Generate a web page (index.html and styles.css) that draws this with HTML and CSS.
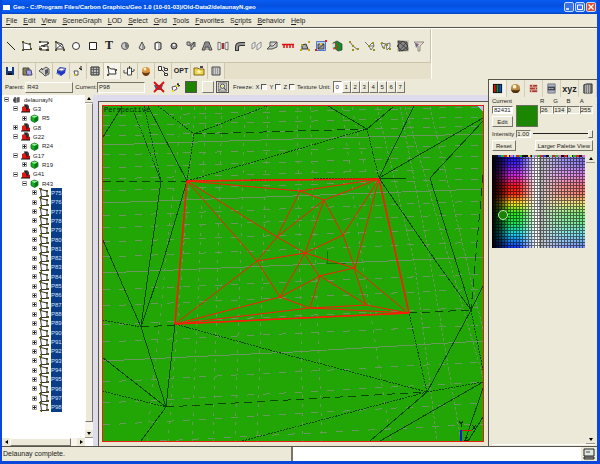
FILE: index.html
```html
<!DOCTYPE html>
<html lang="en">
<head>
<meta charset="utf-8">
<title>Geo - delaunayN.geo</title>
<link rel="stylesheet" href="styles.css">
</head>
<body>
<svg class="defs" aria-hidden="true">
  <symbol id="plus" viewBox="0 0 5 5"><path d="M.5.5h4v4h-4z" fill="#fff" stroke="#999"/><path d="M1 2h3v1H1zM2 1h1v3H2z" fill="#222"/></symbol>
  <symbol id="minus" viewBox="0 0 5 5"><path d="M.5.5h4v4h-4z" fill="#fff" stroke="#999"/><path d="M1 2h3v1H1z" fill="#222"/></symbol>
  <symbol id="group" viewBox="0 0 9 9"><path d="M3 2l3-2 2 2v3H4z" fill="#444"/><path d="M1 3l2-1 2 2v4H1z" fill="#e01818"/><path d="M5 5l2-1 2 1v3H5z" fill="#c01010"/><path d="M3 1h2v2M6 3v3M0 8h9" stroke="#111" fill="none"/></symbol>
  <symbol id="cube" viewBox="0 0 9 9"><path d="M1 2.500L4.500 1 8 2.500v4L4.500 8.500 1 6.500z" fill="#12b022" stroke="#075a0c" stroke-width=".7"/><path d="M1.500 2.500l3-1 3 1-3 1.500z" fill="#8ff08f"/><path d="M4.500 4v4.200L7.700 6.300V2.700z" fill="#087414"/></symbol>
  <symbol id="poly" viewBox="0 0 10 10"><path d="M1.500 1.500L8 3v5.500L2.500 8.500z" fill="#fff" stroke="#333"/><path d="M0 0h3v2H0zM7 2h2v2H7zM7 7h3v2H7zM1 8h2v2H1z" fill="#54542a"/><path d="M0 1h1v1H0zM1 9h1v1H1z" fill="#e8dc20"/></symbol>
</svg>
<div class="window">
  <header class="titlebar">
    <span class="app-icon"></span>
    <h1>Geo - C:/Program Files/Carbon Graphics/Geo 1.0 (10-01-03)/Old-Data2/delaunayN.geo</h1>
    <button class="cap" aria-label="Minimize"><svg viewBox="0 0 8 8"><path d="M1 6h3" stroke="#fff" stroke-width="1.500"/></svg></button>
    <button class="cap" aria-label="Maximize"><svg viewBox="0 0 8 8"><path d="M1.500 2h5v4.500h-5z" fill="none" stroke="#fff"/></svg></button>
    <button class="cap close" aria-label="Close"><svg viewBox="0 0 8 8"><path d="M1.500 1.500l5 5m0-5l-5 5" stroke="#fff" stroke-width="1.400"/></svg></button>
  </header>
  <nav class="menu">
    <a href="#"><u>F</u>ile</a><a href="#"><u>E</u>dit</a><a href="#"><u>V</u>iew</a><a href="#"><u>S</u>ceneGraph</a><a href="#"><u>L</u>OD</a><a href="#"><u>S</u>elect</a><a href="#"><u>G</u>rid</a><a href="#"><u>T</u>ools</a><a href="#"><u>F</u>avorites</a><a href="#">S<u>c</u>ripts</a><a href="#"><u>B</u>ehavior</a><a href="#"><u>H</u>elp</a>
  </nav>
  <section class="toolbars">
    <div class="bars">
      <div class="bar create">
        <button aria-label="Line"><svg viewBox="0 0 12 12"><path d="M2 2l8 8" stroke="#222"/></svg></button>
        <button aria-label="Polygon"><svg viewBox="0 0 12 12"><path d="M2 2.500l7 2 1 5H2.500z" fill="#fff" stroke="#444"/><path d="M1 1h2v2H1zM8 3h2v2H8zM9 8h2v2H9zM1 9h2v2H1z" fill="#55552a"/></svg></button>
        <button aria-label="Mesh"><svg viewBox="0 0 12 12"><path d="M1 2h9v2l-7 2h7v4H2V6" fill="#fff" stroke="#333"/><path d="M1 1h2v2H1zM9 2h2v2H9zM1 8h3v2H1zM8 9h3v2H8zM5 5h2v2H5z" fill="#444422"/></svg></button>
        <button aria-label="Strip"><svg viewBox="0 0 12 12"><path d="M2 2l6 2 2 5H2zl8 7M8 4L2 9" fill="#fff" stroke="#444"/><path d="M1 1h2v2H1zM9 9h2v2H9zM1 9h2v2H1z" fill="#55552a"/></svg></button>
        <button aria-label="Circle"><svg viewBox="0 0 12 12"><circle cx="6" cy="6" r="3.500" fill="#fff" stroke="#333"/></svg></button>
        <button aria-label="Rectangle"><svg viewBox="0 0 12 12"><path d="M2.500 2.500h7v7h-7z" fill="#fff" stroke="#222"/></svg></button>
        <button class="serif">T</button>
        <button aria-label="Sphere"><svg viewBox="0 0 12 12"><circle cx="6" cy="6" r="3.500" fill="#ccc" stroke="#555"/><path d="M6 2v5l3 2V4z" fill="#777"/></svg></button>
        <button aria-label="Cone"><svg viewBox="0 0 12 12"><path d="M6 2l3 6-3 2-3-2z" fill="#ddd" stroke="#444"/><path d="M6 3l2.500 5L6 9z" fill="#999"/></svg></button>
        <button aria-label="Cylinder"><svg viewBox="0 0 12 12"><path d="M3 3l3-1 3 1v6l-3 1-3-1z" fill="#bbb" stroke="#333"/><path d="M4 3.500h2v6H4z" fill="#fff"/></svg></button>
        <button aria-label="Geosphere"><svg viewBox="0 0 12 12"><circle cx="6" cy="6" r="3" fill="#999" stroke="#333"/><path d="M5 4h2v2H5z" fill="#eee"/></svg></button>
        <button aria-label="Extrude"><svg viewBox="0 0 12 12"><path d="M2 2h3v3l4-3v4l-3 4V6L2 5zM6 6l4-4v5" fill="#bbb" stroke="#555"/></svg></button>
        <button aria-label="Loft"><svg viewBox="0 0 12 12"><path d="M4 2h4l1 3 2 5H8V7H4v3H1l2-5z" fill="#aaa" stroke="#444"/><path d="M5 3v7M7 3v7" stroke="#555" stroke-width=".7"/></svg></button>
        <button aria-label="Revolve"><svg viewBox="0 0 12 12"><path d="M1 2l3 1v6l-3 1zM11 2L8 3v6l3 1z" fill="#eee" stroke="#555" stroke-width=".8"/><path d="M5 3h2v6H5z" fill="#a33"/></svg></button>
        <button aria-label="Pipe"><svg viewBox="0 0 12 12"><path d="M3 11V7q0-3 4-3h4" fill="none" stroke="#333" stroke-width="4"/><path d="M3 10V7q0-3 4-3h4" fill="none" stroke="#999" stroke-width="2"/></svg></button>
        <button aria-label="Mirror"><svg viewBox="0 0 12 12"><path d="M2 4l3-2v5L2 9zM7 5l4-3v5l-4 3z" fill="#eee" stroke="#777" stroke-width=".8"/></svg></button>
        <button aria-label="Shell"><svg viewBox="0 0 12 12"><path d="M4 2h7v5L6 9H1l3-3zM4 6h3l4-4" fill="#ccc" stroke="#444" stroke-width=".9"/></svg></button>
        <button aria-label="Distribute"><svg viewBox="0 0 12 12"><path d="M0 4.500h12M2 4v4M5 4v4M8 4v4M11 4v4" stroke="#d11" stroke-width="1.500"/></svg></button>
        <button aria-label="Edit points"><svg viewBox="0 0 12 12"><path d="M3 5l4-1 2 5H3z" fill="#aaa" stroke="#333"/><path d="M1 9h2v2H1zM9 1h2v2H9zM9 9h2v2H9zM2 4h2v2H2z" fill="#b8a818"/></svg></button>
        <button aria-label="Box select"><svg viewBox="0 0 12 12"><path d="M1.500 1.500h9v9h-9z" fill="#bcd0f8" stroke="#5577cc"/><path d="M3 4h6v5H3zM3 9l6-5" fill="#999" stroke="#333" stroke-width=".8"/><path d="M0 9h2v2H0zM10 0h2v2h-2z" fill="#d22"/><path d="M5 3h2v2H5z" fill="#dc3"/></svg></button>
        <button aria-label="Colorize"><svg viewBox="0 0 12 12"><path d="M2 3l4-2 5 3v6l-4 1-5-4z" fill="#178a2a" stroke="#333" stroke-width=".7"/><path d="M1 6l4-3M2 9l4-1M4 3l3 5" stroke="#d22"/><path d="M1 4l3-1v4l-3 1z" fill="#ddd"/></svg></button>
        <button aria-label="Snap line"><svg viewBox="0 0 12 12"><path d="M2 2l3 4 5 4" fill="none" stroke="#666"/><path d="M1 1h2v2H1zM4 5h2v2H4zM9 8h2v2H9zM4 9h2v2H4z" fill="#989020"/></svg></button>
        <button aria-label="Snap polygon"><svg viewBox="0 0 12 12"><path d="M1 2l4 4h5M5 6l4-4 1 4-3 4z" fill="#eee" stroke="#555" stroke-width=".8"/><path d="M4 5h2v2H4zM8 2h2v2H8zM9 9h2v2H9z" fill="#989020"/></svg></button>
        <button aria-label="Join"><svg viewBox="0 0 12 12"><path d="M1 3l5 1-3 4zM6 4l4-1v4l-3 3z" fill="#eee" stroke="#555" stroke-width=".8"/><path d="M1 2h2v2H1zM3 7h2v2H3zM6 4h2v2H6zM9 8h2v2H9z" fill="#989020"/></svg></button>
        <button class="on" aria-label="Delaunay"><svg viewBox="0 0 12 12"><path d="M1 1l9 1 1 8-9 1zM1 1l10 9M2 11l8-9M0 6l6-5 5 5-6 5z" fill="#888" stroke="#333" stroke-width=".8"/></svg></button>
        <button aria-label="Filter"><svg viewBox="0 0 12 12"><path d="M1 2h10L7 6v5H5V6z" fill="#f0d8c8" stroke="#777" stroke-width=".8"/><path d="M2 3l4 1-3 4z" fill="#668"/></svg></button>
      </div>
      <div class="bar modes">
        <button aria-label="Save"><svg viewBox="0 0 12 12"><path d="M2 2h8v8H2z" fill="#163a78"/><path d="M4 2h4v4H4z" fill="#e8f0ff"/><path d="M4 8h4v2H4z" fill="#111"/></svg></button>
        <button aria-label="Paste"><svg viewBox="0 0 12 12"><path d="M2 3h6v7H2z" fill="#8a8450" stroke="#444"/><path d="M5 5h5l1 5H6z" fill="#a8a8e8" stroke="#447"/></svg></button>
        <button aria-label="Back"><svg viewBox="0 0 12 12"><path d="M1 6l3-3v2l4-3 3 2v5l-4 2-3-3z" fill="#ccc" stroke="#333" stroke-width=".8"/><path d="M7 5l3-1v4l-3 2z" fill="#555"/></svg></button>
        <button aria-label="Solid"><svg viewBox="0 0 12 12"><path d="M2 5l3-3 6 1-1 5-4 3-4-3z" fill="#2038c8"/><path d="M3 5l3-2 4 1-3 2zM1 8l4 2" fill="#fff" stroke="#88a"/></svg></button>
        <button aria-label="Pick"><svg viewBox="0 0 12 12"><path d="M2 6h4v4H3z" fill="#fff" stroke="#555"/><path d="M7 3l3 2M9 1v4" stroke="#111"/><path d="M2 9h2v2H2z" fill="#bb2"/></svg></button>
        <button aria-label="Grid"><svg viewBox="0 0 12 12"><path d="M2 2h8v8H2z" fill="#bbb" stroke="#222"/><path d="M4.500 2v8M7.500 2v8M2 4.500h8M2 7.500h8" stroke="#555" stroke-width=".8"/></svg></button>
        <button class="on" aria-label="Polygon mode"><svg viewBox="0 0 12 12"><path d="M2 2l1 7h7L9 4H5z" fill="#fff" stroke="#333"/><path d="M1 1h2v2H1zM9 4h2v2H9zM1 9h2v2H1z" fill="#55552a"/></svg></button>
        <button aria-label="Transform"><svg viewBox="0 0 12 12"><path d="M4.500 3h4v7h-4zM6.500 1v3M1 5v3h3M8 7l3-1V4" fill="#fff" stroke="#333" stroke-width=".9"/></svg></button>
        <button aria-label="Shade"><svg viewBox="0 0 12 12"><circle cx="6" cy="6" r="4" fill="#d8943c"/><path d="M2 7q4 2 8 0q-1 4-4 4t-4-4" fill="#6e3a10"/><circle cx="5" cy="4" r="1.500" fill="#fff0c0"/></svg></button>
        <button aria-label="Hierarchy"><svg viewBox="0 0 12 12"><path d="M1.500 1.500h3v4h-3zM6 2l2 1M5 5l3 3" fill="#fff" stroke="#333"/><path d="M7.500 3.500h3v2h-3zM7.500 8.500h3v2h-3z" fill="#fff" stroke="#333"/></svg></button>
        <button class="opt">OPT</button>
        <button aria-label="Folder"><svg viewBox="0 0 12 12"><path d="M1 3h4l1 1h5v6H1z" fill="#f0d048" stroke="#806818"/><path d="M6 4l1 2h2L7 7l1 2-2-1-2 1 1-2-2-1h2z" fill="#fff8c0"/><path d="M7 1h3v2H7z" fill="#445"/></svg></button>
        <button aria-label="Texture"><svg viewBox="0 0 12 12"><path d="M2 2h8v8H2z" fill="#ccc" stroke="#444"/><path d="M3 4h6M3 6h6M3 8h6" stroke="#666" stroke-dasharray="1 1"/></svg></button>
      </div>
    </div>
  </section>
  <main class="work">
    <div class="left">
      <form class="params">
        <span class="field"><label for="parent">Parent:</label><input id="parent" class="raised" value="R43" readonly></span>
        <span class="field tight"><label for="current">Current:</label><input id="current" class="sunken" value="P98" readonly></span>
        <button type="button" class="tool first" aria-label="Disable"><svg viewBox="0 0 12 12"><path d="M1 4h9l-2 5H3z" fill="#557"/><path d="M1 1l10 10M11 1L1 11" stroke="#e01010" stroke-width="1.800"/></svg></button>
        <button type="button" class="tool" aria-label="Pick vertex"><svg viewBox="0 0 12 12"><path d="M2 6l4-1 1 3-4 2z" fill="#fff" stroke="#555"/><path d="M8 2v4M7 3l3 2" stroke="#111"/><path d="M6 4h2v2H6zM2 9h2v2H2z" fill="#dd3"/></svg></button>
        <button type="button" class="color" aria-label="Color"></button>
        <button type="button" class="blank" aria-label="No texture"></button>
        <button type="button" class="tool picked" aria-label="Snap"><svg viewBox="0 0 12 12"><path d="M1 1h10v10H1z" fill="#ccc" stroke="#666"/><circle cx="6" cy="5" r="2.500" fill="#fff" stroke="#333"/><path d="M8 7l2 3M2 10l2-2" stroke="#222"/><path d="M5 4h2v2H5z" fill="#dd3"/></svg></button>
        <span class="freeze">Freeze:</span>
        <label for="fx">X</label><input type="checkbox" id="fx">
        <label for="fy">Y</label><input type="checkbox" id="fy">
        <label for="fz">Z</label><input type="checkbox" id="fz">
        <span>Texture Unit:</span>
        <span class="units"><button type="button" class="sel">0</button><button type="button">1</button><button type="button">2</button><button type="button">3</button><button type="button">4</button><button type="button">5</button><button type="button">6</button><button type="button">7</button></span>
      </form>
      <div class="split">
        <aside class="tree">
          <ul>
            <li><svg><use href="#minus"/></svg><svg class="ic" viewBox="0 0 9 9"><path d="M1 4l2-2 2 1 3-1v5L5 8 1 7z" fill="#999"/><path d="M3 2v6M6 2v5M1 5h2" stroke="#222"/></svg><span>delaunayN</span></li>
            <li class="g"><svg><use href="#minus"/></svg><svg class="ic"><use href="#group"/></svg><span>G3</span></li>
            <li class="r"><svg><use href="#plus"/></svg><svg class="ic"><use href="#cube"/></svg><span>R5</span></li>
            <li class="g"><svg><use href="#plus"/></svg><svg class="ic"><use href="#group"/></svg><span>G8</span></li>
            <li class="g"><svg><use href="#minus"/></svg><svg class="ic"><use href="#group"/></svg><span>G22</span></li>
            <li class="r"><svg><use href="#plus"/></svg><svg class="ic"><use href="#cube"/></svg><span>R24</span></li>
            <li class="g"><svg><use href="#minus"/></svg><svg class="ic"><use href="#group"/></svg><span>G17</span></li>
            <li class="r"><svg><use href="#plus"/></svg><svg class="ic"><use href="#cube"/></svg><span>R19</span></li>
            <li class="g"><svg><use href="#minus"/></svg><svg class="ic"><use href="#group"/></svg><span>G41</span></li>
            <li class="r"><svg><use href="#minus"/></svg><svg class="ic"><use href="#cube"/></svg><span>R43</span></li>
            <li class="p"><svg><use href="#plus"/></svg><svg class="ic"><use href="#poly"/></svg><span>P75</span></li>
            <li class="p"><svg><use href="#plus"/></svg><svg class="ic"><use href="#poly"/></svg><span>P76</span></li>
            <li class="p"><svg><use href="#plus"/></svg><svg class="ic"><use href="#poly"/></svg><span>P77</span></li>
            <li class="p"><svg><use href="#plus"/></svg><svg class="ic"><use href="#poly"/></svg><span>P78</span></li>
            <li class="p"><svg><use href="#plus"/></svg><svg class="ic"><use href="#poly"/></svg><span>P79</span></li>
            <li class="p"><svg><use href="#plus"/></svg><svg class="ic"><use href="#poly"/></svg><span>P80</span></li>
            <li class="p"><svg><use href="#plus"/></svg><svg class="ic"><use href="#poly"/></svg><span>P81</span></li>
            <li class="p"><svg><use href="#plus"/></svg><svg class="ic"><use href="#poly"/></svg><span>P82</span></li>
            <li class="p"><svg><use href="#plus"/></svg><svg class="ic"><use href="#poly"/></svg><span>P83</span></li>
            <li class="p"><svg><use href="#plus"/></svg><svg class="ic"><use href="#poly"/></svg><span>P84</span></li>
            <li class="p"><svg><use href="#plus"/></svg><svg class="ic"><use href="#poly"/></svg><span>P85</span></li>
            <li class="p"><svg><use href="#plus"/></svg><svg class="ic"><use href="#poly"/></svg><span>P86</span></li>
            <li class="p"><svg><use href="#plus"/></svg><svg class="ic"><use href="#poly"/></svg><span>P87</span></li>
            <li class="p"><svg><use href="#plus"/></svg><svg class="ic"><use href="#poly"/></svg><span>P88</span></li>
            <li class="p"><svg><use href="#plus"/></svg><svg class="ic"><use href="#poly"/></svg><span>P89</span></li>
            <li class="p"><svg><use href="#plus"/></svg><svg class="ic"><use href="#poly"/></svg><span>P90</span></li>
            <li class="p"><svg><use href="#plus"/></svg><svg class="ic"><use href="#poly"/></svg><span>P91</span></li>
            <li class="p"><svg><use href="#plus"/></svg><svg class="ic"><use href="#poly"/></svg><span>P92</span></li>
            <li class="p"><svg><use href="#plus"/></svg><svg class="ic"><use href="#poly"/></svg><span>P93</span></li>
            <li class="p"><svg><use href="#plus"/></svg><svg class="ic"><use href="#poly"/></svg><span>P94</span></li>
            <li class="p"><svg><use href="#plus"/></svg><svg class="ic"><use href="#poly"/></svg><span>P95</span></li>
            <li class="p"><svg><use href="#plus"/></svg><svg class="ic"><use href="#poly"/></svg><span>P96</span></li>
            <li class="p"><svg><use href="#plus"/></svg><svg class="ic"><use href="#poly"/></svg><span>P97</span></li>
            <li class="p"><svg><use href="#plus"/></svg><svg class="ic"><use href="#poly"/></svg><span>P98</span></li>
          </ul>
          <div class="vbar"><i class="up"></i><b></b><i class="down"></i></div>
          <div class="hbar"><i class="lt"></i><b></b><i class="rt"></i></div>
          <div class="corner"></div>
        </aside>
        <div class="stage">
          <div class="view">
            <svg viewBox="103 106 380 335" preserveAspectRatio="none" shape-rendering="crispEdges" fill="none">
              <g stroke="#6a9660">
                <path d="M103 145l190-6 190-5M103 203l190-7 190-7M103 273l190-8 190-8M103 361l190-9 190-11"/>
                <path stroke-dasharray="7 9" d="M103 116l380-9M103 126l380-9M103 136l380-10M103 155l380-10M103 168l380-12M103 179l380-11M103 191l380-12M103 216l380-15M103 228l380-14M103 242l380-14M103 257l380-15M103 290l380-16M103 306l380-17M103 325l380-18M103 342l380-17M103 382l380-20M103 403l380-21M103 425l380-22M160 441l323-17"/>
                <path stroke-dasharray="3 6" d="M182 107l-35 334M195 107l-27 334M206 107l-14 334M222 107l-9 334M245 107l-10 334M268 107l-11 334M297 107l6 334M310 107l12 334M342 107l20 153 29 181M352 107l21 100"/>
                <path stroke-dasharray="3 2" d="M377 107l38 158 22 176M400 107l30 153 31 181M430 107l53 223M405 107l78 270"/>
              </g>
              <g stroke="#06480a">
                <path d="M103 137l15-24 4-7M102 238l39 89M161 181l-11 79-9 67M187 181l-25 84-21 62M141 327l25 80 9-83M102 357l64 50-25 34M148 106l39 75M379 178h27M379 178l35-72M328 106l39 23 26-22M379 178l104-60M430 178l53-57M430 178l41 132M379 178l56 82 36 50-44 82M471 310l12-24M427 392l-57 49M483 382l-103 59M483 388l-18 53M483 417l-15 24"/>
                <path stroke-dasharray="2 1" d="M133 110l28 71M144 106l17 75M158 106l36 28 73-28M194 134l-7 47 108-31 72-21 12 49M102 320l39 7M102 391l64 16M175 324l120 33 132 35-132 35-53 14M427 392l-18-79M427 392l56-10M471 310l12 60M379 178l-192 3"/>
                <path stroke-dasharray="8 5" d="M194 134l173-5M103 181h84M141 327l34-2M166 407l261-15M409 313l62-3M483 175l-12 135"/>
                <path stroke="#0b7808" d="M328 251l-1 12h19"/>
              </g>
              <g stroke="#ff1a0a" shape-rendering="auto">
                <path d="M187 181l192-2 30 134-234 11zM187 181l113 10 79-12-55 21-24-9-23 46-90-56 70 80 20-24 47-37-19 53-28-16M324 200l19 35 36-56-24 89-12-33-38 18-48 8-82 63 105-27 25-44 49 15 54 45-42-8-12-37-35 8-15-23M320 276l47 29-57 3 10-32-40 21 30 11-135 16M257 261l23 36M310 308l99 5"/>
                <path stroke-width="1.500" d="M187 181l192-2M175 324l234-11M187 181l-12 143M379 179l30 134"/>
              </g>
              <path d="M461 441v-11" stroke="#1020d0" stroke-width="2"/><path d="M462 430h10" stroke="#e01010"/><path d="M459 421l2 3 2-3M461 424v3M472 425l4 5m0-5l-4 5M465 437h3l-3 3h3" stroke="#053308"/>
              <path d="M477 106h6v5z" fill="#a8c8f8"/>
            </svg>
            <span class="caption">Perspective</span>
          </div>
        </div>
      </div>
    </div>
    <aside class="panel">
      <div class="tabs">
        <button class="sel" aria-label="Colors"><svg viewBox="0 0 12 12"><path d="M1 1h10v10H1z" fill="#111"/><path d="M2 2h2v8H2z" fill="#e01010"/><path d="M5 2h2v8H5z" fill="#109030"/><path d="M8 2h2v8H8z" fill="#1050e0"/></svg></button>
        <button aria-label="Materials"><svg viewBox="0 0 12 12"><circle cx="6" cy="6" r="5" fill="#b88a48"/><path d="M1 7q5 2 10 0q-1 4-5 4T1 7" fill="#4e300e"/><circle cx="5" cy="4" r="2" fill="#fff4cc"/></svg></button>
        <button aria-label="Textures"><svg viewBox="0 0 12 12"><path d="M2 2h8v8H2z" fill="#a83830"/><path d="M2 4.500h8M2 7.500h8M5 2v2M8 5v2M4 8v2" stroke="#e8c8b8"/></svg></button>
        <button aria-label="Layers"><svg viewBox="0 0 12 12"><path d="M2 1h8v10H2z" fill="#a8b0c0" stroke="#778"/><path d="M2 4h8v4H2z" fill="#445"/><path d="M3 6h6" stroke="#fff" stroke-dasharray="1 1"/></svg></button>
        <button class="xyz">xyz</button>
        <button aria-label="Library"><svg viewBox="0 0 12 12"><path d="M2 2l3-1h6v10H2z" fill="#777" stroke="#333"/><path d="M4 2v9M6 2v9M8 2v9" stroke="#bbb"/></svg></button>
      </div>
      <form class="props">
        <div class="rgba">
          <div class="cur"><label for="idx">Current</label><input id="idx" value="82431"><button type="button">Edit</button></div>
          <div class="swatch"></div>
          <div><label for="r">R</label><input id="r" value="26"></div>
          <div><label for="gg">G</label><input id="gg" value="134"></div>
          <div><label for="bb">B</label><input id="bb" value="0"></div>
          <div><label for="aa">A</label><input id="aa" value="255"></div>
        </div>
        <div class="row"><label for="int">Intensity</label><input class="val" value="1.00" aria-label="Intensity value"><input type="range" id="int" min="0" max="1" step="0.01" value="1"></div>
        <div class="row ends"><button type="button">Reset</button><button type="button" class="wide">Larger Palette View</button></div>
      </form>
      <div class="pal">
        <svg viewBox="0 0 93 93" shape-rendering="crispEdges">
          <defs>
            <linearGradient id="hue" x2="0" y2="1"><stop offset="0" stop-color="#1414f0"/><stop offset=".1" stop-color="#4a20f8"/><stop offset=".22" stop-color="#d828e0"/><stop offset=".33" stop-color="#ff1020"/><stop offset=".42" stop-color="#ff2808"/><stop offset=".52" stop-color="#ffe810"/><stop offset=".63" stop-color="#20e818"/><stop offset=".74" stop-color="#10e858"/><stop offset=".85" stop-color="#10d8f0"/><stop offset="1" stop-color="#1030f8"/></linearGradient>
            <linearGradient id="tone"><stop offset="0" stop-color="#000"/><stop offset=".1" stop-color="#000" stop-opacity=".6"/><stop offset=".2" stop-color="#000" stop-opacity="0"/><stop offset=".28" stop-color="#fff" stop-opacity="0"/><stop offset=".38" stop-color="#fff" stop-opacity=".5"/><stop offset=".46" stop-color="#fff" stop-opacity=".95"/><stop offset=".5" stop-color="#fff"/><stop offset=".51" stop-color="#aaa"/><stop offset=".56" stop-color="#d4d4d4" stop-opacity=".9"/><stop offset=".75" stop-color="#eee" stop-opacity=".6"/><stop offset="1" stop-color="#e8e8e8" stop-opacity=".45"/></linearGradient>
            <pattern id="cells" width="3" height="3" patternUnits="userSpaceOnUse"><path d="M0 0h3v1H1v2H0z" fill="#000" fill-opacity=".55"/></pattern>
          </defs>
          <path d="M0 0h93v93H0z" fill="url(#hue)"/><path d="M0 0h93v93H0z" fill="url(#tone)"/><path d="M0 0h93v93H0z" fill="url(#cells)"/>
          <path d="M0 0h93v2H0z" fill="#111"/>
          <g stroke-width="2"><path d="M6 1h87" stroke="#2848e0" stroke-dasharray="3 12"/><path d="M9 1h84" stroke="#20b828" stroke-dasharray="3 15"/><path d="M12 1h81" stroke="#e02020" stroke-dasharray="3 9"/><path d="M15 1h78" stroke="#f0e040" stroke-dasharray="2 19"/><path d="M18 1h75" stroke="#e070c0" stroke-dasharray="3 21"/><path d="M22 1h70" stroke="#60e0e8" stroke-dasharray="2 16"/></g>
          <circle cx="11" cy="60" r="4.500" fill="#1c8000" stroke="#b8f0b0" shape-rendering="auto"/>
        </svg>
        <div class="vbar"><i class="up"></i><b></b><i class="down"></i></div>
      </div>
    </aside>
  </main>
  <footer class="status">
    <output>Delaunay complete.</output>
    <input aria-label="Command">
    <button aria-label="Console"><svg viewBox="0 0 12 12"><path d="M1 1h10v7H1z" fill="#dfe8e0" stroke="#222"/><path d="M3 4h4" stroke="#444"/><path d="M1 9h10v2H1z" fill="#aaa" stroke="#222"/></svg></button>
  </footer>
</div>
</body>
</html>
```
FILE: styles.css
```css
* { box-sizing: border-box; }
body {
  margin: 0;
  font-family: "Liberation Sans", Arial, sans-serif;
  font-size: 7px;
  line-height: 8px;
  color: #222;
}
button, input { margin: 0; padding: 0; border: 0; border-radius: 0; font: inherit; color: inherit; background: none; min-width: 0; }
svg { display: block; }
.defs { position: absolute; width: 0; height: 0; }

.window {
  height: 100vh;
  display: flex;
  flex-direction: column;
  background: #ece9d8;
  border: solid #0a48dc;
  border-width: 0 3px 3px 2px;
}

.titlebar {
  flex: 0 0 14px;
  display: flex;
  align-items: center;
  gap: 1px;
  padding-right: 1px;
  color: #fff;
  background: linear-gradient(#0a5cf0, #0450e0 40%, #0860f8 80%, #0444c0);
}
.titlebar h1 { flex: 1; margin: 0 0 0 2px; font-size: 6px; font-weight: bold; white-space: nowrap; }
.app-icon { width: 7px; height: 5px; margin-left: 1px; background: #fff; }
.cap { width: 10px; height: 10px; border: 1px solid #c8dcff; border-radius: 2px; background: #3a70e8; }
.cap.close { background: #e04c28; }

.menu {
  flex: 0 0 14px;
  display: flex;
  align-items: center;
  gap: 6px;
  padding-left: 4px;
  border-bottom: 1px solid #55554c;
}
.menu a { color: inherit; text-decoration: none; }

.toolbars { flex: 0 0 51px; display: flex; border-top: 1px solid #fff; }
.bars {
  flex: 0 1 430px;
  display: flex;
  flex-direction: column;
  border-right: 1px solid #fff;
  background: #e6e0ca;
}
.bar { display: flex; }
.bar svg { width: 12px; height: 12px; margin: auto; }
.create { flex: 0 0 34px; padding: 0 3px 0 1px; background: #ece9d8; border: solid #cbc5a8; border-width: 0 1px 1px 0; }
.create button { flex: 1; }
.create .serif { font: bold 12px "Liberation Serif", serif; }
.create .on svg { background: #d4d0bc; }
.modes { flex: 1; align-self: flex-start; background: #ece9d8; }
.modes button { width: 17px; border-right: 1px solid #cfc8aa; }
.modes .on { background: #f6f4ea; }
.modes .opt { width: 19px; font-weight: bold; }

.work { flex: 1; min-height: 0; display: flex; }
.left { flex: 1; min-width: 0; display: flex; flex-direction: column; }

.params { flex: 0 0 16px; display: flex; align-items: center; gap: 2px; padding-left: 3px; font-size: 6px; white-space: nowrap; }
.params > * { flex: none; }
.field { display: flex; align-items: center; gap: 1px; }
.tight { gap: 0; }
.field input { width: 48px; height: 11px; padding-left: 1px; border: 1px solid; }
.field .raised { border-color: #fff #77756a #77756a #fff; }
.field .sunken { border-color: #77756a #fff #fff #77756a; }
.tool { width: 13px; height: 12px; }
.first { margin: 0 2px 0 6px; }
.tool svg { width: 12px; height: 12px; }
.params .picked { border: 1px solid #555; }
.params .picked svg { width: 11px; height: 10px; }
.color { width: 12px; height: 12px; margin-right: 3px; background: #208200; border: 1px solid #555; }
.blank { width: 12px; height: 12px; border: 1px solid; border-color: #fff #777 #777 #fff; }
.freeze { margin-left: 2px; }
.params [type="checkbox"] { appearance: none; width: 6px; height: 6px; border: 1px solid; border-color: #555 #fff #fff #555; background: #f8f7f0; }
.units { display: flex; }
.units button { width: 9px; height: 12px; border: 1px solid; border-color: #fff #77756a #77756a #fff; }
.units .sel { background: #fff; border-color: #77756a #fff #fff #77756a; }

.split { flex: 1; min-height: 0; display: flex; background: #dedbec; }
.tree {
  flex: 0 0 91px;
  display: grid;
  grid-template: minmax(0, 1fr) 8px / minmax(0, 1fr) 8px;
  font-size: 6px;
  background: #fff;
}
.tree ul { margin: 0; padding: 0 0 26px 2px; list-style: none; display: grid; grid-auto-rows: minmax(0, 1fr); }
.tree li { display: flex; align-items: center; gap: 3px; }
.tree li svg { flex: none; width: 5px; height: 5px; }
.tree li .ic { width: 9px; height: 9px; }
.tree .g { padding-left: 9px; }
.tree .r { padding-left: 18px; }
.tree .p { padding-left: 28px; gap: 2px; }
.tree .p .ic { width: 10px; height: 10px; }
.tree .p span { align-self: stretch; display: flex; align-items: center; width: 11px; color: #d4e2ff; background: #0a3c88; white-space: nowrap; }
.vbar, .hbar { display: flex; background: #f8f6ec; }
.vbar { flex-direction: column; }
.vbar b, .hbar b { flex: 1; background: #ece9d8; border: 1px solid; border-color: #fff #77756a #77756a #fff; }
.tree .vbar b { margin-bottom: 8px; }
.hbar b { margin-right: 6px; }
.vbar i, .hbar i { flex: 0 0 8px; display: grid; place-items: center; background: #ece9d8; }
.vbar i { border-bottom: 1px solid #99978a; }
.vbar i::before, .hbar i::before { content: ""; border: 2px solid transparent; }
.vbar .up::before { border-bottom: 3px solid #000; border-top: 0; }
.vbar .down::before { border-top: 3px solid #000; border-bottom: 0; }
.hbar .lt::before { border-right: 3px solid #000; border-left: 0; }
.hbar .rt::before { border-left: 3px solid #000; border-right: 0; }

.stage {
  flex: 1;
  min-width: 0;
  display: flex;
  margin: 6px 0 0 5px;
  padding: 3px 4px 4px 3px;
  background: #ece6d2;
  border: solid #55554c;
  border-width: 1px 0 0 1px;
}
.view { position: relative; flex: 1; border: 1px solid #e81c10; background: #22a606; }
.view svg { position: absolute; inset: 0; width: 100%; height: 100%; }
.caption { position: absolute; left: 1px; top: 0; font: 7px/9px "Liberation Mono", monospace; color: #052a05; }

.panel { flex: 0 0 109px; min-width: 0; display: flex; flex-direction: column; border: solid #55554c; border-width: 1px 0 0 1px; }
.tabs { flex: 0 0 17px; display: flex; }
.tabs button { flex: 1; border-right: 1px solid #d4ceb4; }
.tabs svg { width: 11px; height: 11px; margin: auto; }
.tabs .sel { background: #f4f2e6; }
.tabs .xyz { font-weight: bold; font-size: 9px; }
.props { padding: 0 4px 0 3px; font-size: 6px; }
.props button { height: 11px; padding: 0 3px; border: 1px solid; border-color: #fff #77756a #77756a #fff; line-height: 8px; }
.props input:not([type="range"]) { width: 100%; height: 8px; padding-left: 1px; line-height: 7px; border: 1px solid; border-color: #77756a #fff #fff #77756a; }
.rgba { display: flex; }
.rgba > div { flex: 1; min-width: 0; display: flex; flex-direction: column; }
.rgba > .cur { flex: 0 0 21px; }
.rgba label { height: 9px; line-height: 9px; }
.rgba .cur input { background: #fff; }
.rgba .cur button { margin-top: 2px; }
.rgba > .swatch { flex: 0 0 22px; height: 22px; margin: 8px 2px 0 3px; background: #1c8600; border: 1px solid #66705a; }
.props .rgba div:not(.cur) input { padding-left: 0; }
.row { display: flex; align-items: center; gap: 2px; height: 11px; margin-top: 1px; }
.props .row .val { width: 15px; flex: none; padding-left: 0; }
.row [type="range"] { appearance: none; flex: 1; height: 8px; background: linear-gradient(#222, #222) center / 100% 1px no-repeat; }
.row [type="range"]::-webkit-slider-thumb { appearance: none; width: 5px; height: 8px; background: #ece9d8; border: 1px solid; border-color: #fff #666 #666 #fff; }
.ends { justify-content: space-between; white-space: nowrap; }
.props .ends .wide { padding: 0 2px; }
.pal { flex: 1; display: flex; justify-content: space-between; align-items: flex-start; margin: 4px 2px 1px 3px; border-bottom: 1px solid #fff; }
.pal svg { flex: 0 0 93px; height: 93px; }
.pal .vbar { align-self: stretch; flex: 0 0 9px; background: #f0eddf; }
.pal .vbar b { border-color: transparent; }

.status { flex: 0 0 15px; display: flex; border-top: 1px solid #55554c; }
.status output { flex: 1; align-self: center; padding-left: 1px; }
.status input { flex: 1; background: #fff; border-left: 2px solid #77756a; }
.status button { flex: 0 0 16px; display: grid; place-items: center; }
.status svg { width: 12px; height: 12px; }
```
